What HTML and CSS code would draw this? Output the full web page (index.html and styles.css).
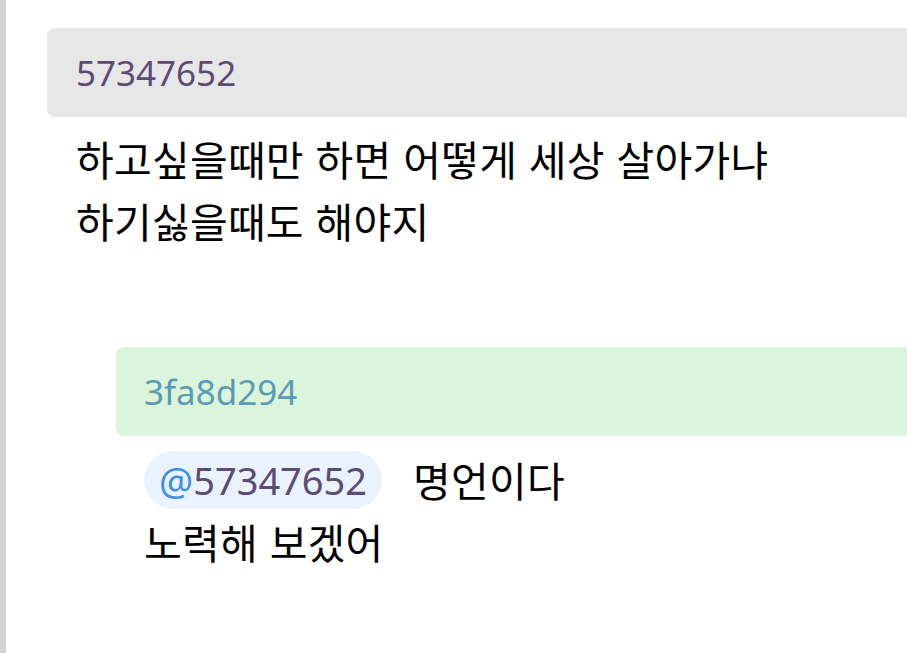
FILE: index.html
```html
<!DOCTYPE html>
<html lang="ko">
<head>
<meta charset="utf-8">
<link rel="stylesheet" href="styles.css">
</head>
<body>
<div class="thread">
  <div class="comment">
    <div class="head head-gray"><span class="uid uid-purple">57347652</span></div>
    <div class="text">하고싶을때만 하면 어떻게 세상 살아가냐<br>하기싫을때도 해야지</div>
    <div class="reply">
      <div class="head head-green"><span class="uid uid-teal">3fa8d294</span></div>
      <div class="text"><span class="mention"><span class="at">@</span>57347652</span><span class="after">명언이다</span><br>노력해 보겠어</div>
    </div>
  </div>
</div>
</body>
</html>
```
FILE: styles.css
```css
html, body {
  margin: 0;
  padding: 0;
  background: #ffffff;
}
body {
  font-family: "Noto Sans", "Noto Sans CJK KR", sans-serif;
  color: #000;
  overflow: hidden;
}
.thread {
  border-left: 6px solid #d3d3d3;
  min-height: 653px;
  box-sizing: border-box;
  padding: 28px 0 0 41px;
}
.head {
  height: 89px;
  display: flex;
  align-items: center;
  padding-left: 29px;
  border-radius: 8px 0 0 8px;
  font-size: 35px;
}
.head-gray { background: #e7e7e7; }
.head-green { background: #dbf4dc; padding-left: 28px; }
.uid-purple { color: #5c4b75; }
.uid-teal { color: #5a9bb4; }
.text {
  font-family: "Noto Sans CJK KR", "Noto Sans", sans-serif;
  font-size: 41px;
  line-height: 62px;
  letter-spacing: 0.25px;
  padding: 10px 0 0 29px;
}
.reply {
  margin: 96px 0 0 69px;
}
.reply .text { padding-left: 28px; padding-top: 12px; }
.mention {
  display: inline-block;
  font-family: "Noto Sans", sans-serif;
  font-size: 38px;
  line-height: 58px;
  letter-spacing: 0;
  margin-top: 3px;
  padding: 0 15px;
  border-radius: 29px;
  background: #e9f2fd;
  color: #5c4b75;
  vertical-align: top;
}
.at { color: #3d8fe8; }
.after { margin-left: 31px; }
```
